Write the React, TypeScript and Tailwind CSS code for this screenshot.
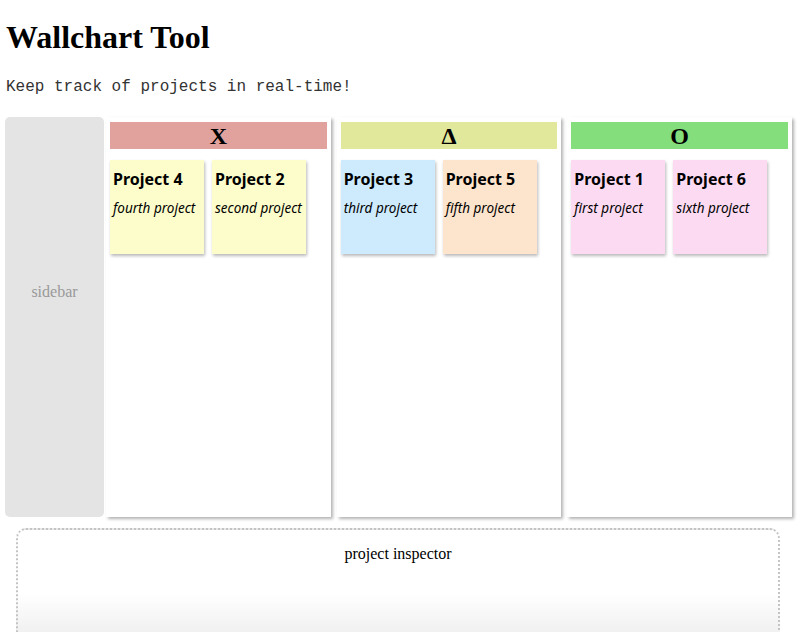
import React from 'react';

interface Project {
  id: number;
  name: string;
  description: string;
  color: string;
}

interface Column {
  symbol: string;
  headerColor: string;
  projects: Project[];
}

const columns: Column[] = [
  {
    symbol: 'X',
    headerColor: 'bg-[#e1a29e]',
    projects: [
      { id: 4, name: 'Project 4', description: 'fourth project', color: 'bg-[#fdfdcb]' },
      { id: 2, name: 'Project 2', description: 'second project', color: 'bg-[#fdfdcb]' },
    ],
  },
  {
    symbol: 'Δ',
    headerColor: 'bg-[#e1e89b]',
    projects: [
      { id: 3, name: 'Project 3', description: 'third project', color: 'bg-[#cdebfd]' },
      { id: 5, name: 'Project 5', description: 'fifth project', color: 'bg-[#fde4cc]' },
    ],
  },
  {
    symbol: 'O',
    headerColor: 'bg-[#84de7c]',
    projects: [
      { id: 1, name: 'Project 1', description: 'first project', color: 'bg-[#fcdbf2]' },
      { id: 6, name: 'Project 6', description: 'sixth project', color: 'bg-[#fcdbf2]' },
    ],
  },
];

function ProjectCard({ project }: { project: Project }) {
  return (
    <div
      className={`w-[94px] h-[94px] ${project.color} px-[3px] pt-[9px] shadow-[1px_2px_3px_rgba(0,0,0,0.28)] font-['Noto_Sans',sans-serif] text-black`}
    >
      <div className="text-[16px] leading-[20px] font-bold">{project.name}</div>
      <div className="mt-[11px] text-[13.5px] leading-[17px] italic">{project.description}</div>
    </div>
  );
}

function WallColumn({ column }: { column: Column }) {
  return (
    <div className="flex-1 bg-white shadow-[2px_2px_3px_rgba(0,0,0,0.3)] px-[4px] pt-[5px]">
      <div
        className={`${column.headerColor} h-[27px] flex items-center justify-center font-['Liberation_Serif',serif] font-bold text-[24px] leading-none text-black`}
      >
        {column.symbol}
      </div>
      <div className="flex gap-[8px] mt-[11px]">
        {column.projects.map((p) => (
          <ProjectCard key={p.id} project={p} />
        ))}
      </div>
    </div>
  );
}

export default function App() {
  return (
    <div className="min-h-screen bg-white px-[5px] font-['Liberation_Serif',serif] overflow-hidden h-[632px]">
      <h1 className="pl-[1px] pt-[19px] text-[32px] leading-[36px] font-bold text-black">
        Wallchart Tool
      </h1>
      <p className="pl-[1px] mt-[23px] font-['Liberation_Mono',monospace] text-[16px] leading-[18px] text-[#333]">
        Keep track of projects in real-time!
      </p>

      <div className="flex mt-[21px] h-[400px]">
        <div className="w-[99px] shrink-0 bg-[#e4e4e4] rounded-[5px] pt-[166px] text-center text-[16px] leading-[18px] text-[#999]">
          sidebar
        </div>
        <div className="flex flex-1 gap-[6px] ml-[2px] mr-[1px]">
          {columns.map((c) => (
            <WallColumn key={c.symbol} column={c} />
          ))}
        </div>
      </div>

      <div className="mt-[11px] ml-[11px] mr-[13px] h-[130px] rounded-[10px] border-2 border-dotted border-[#c4c4c4] bg-gradient-to-b from-white from-[50%] to-[#e8e8e8] pt-[15px] text-center text-[16px] leading-[18px] text-black">
        project inspector
      </div>
    </div>
  );
}
